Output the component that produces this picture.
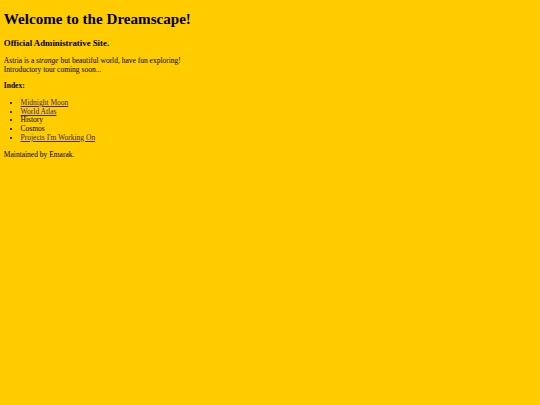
export default function App() {
  return (
    <div className="min-h-[405px] bg-[#ffcc00] p-[3.8px] text-[7.5px] leading-[1.15] text-black" style={{ fontFamily: '"Liberation Serif", "Times New Roman", serif' }}>
      <h1 className="mt-[6.8px] mb-[10px] text-[15.1px] font-bold leading-[1.15]">Welcome to the Dreamscape!</h1>
      <h3 className="mb-[9.4px] text-[8.8px] font-bold leading-[1.15]">Official Administrative Site.</h3>
      <p className="mb-[7.5px]">
        Astria is a <em>strange</em> but beautiful world, have fun exploring!
        <br />
        Introductory tour coming soon...
      </p>
      <h4 className="mb-[8.3px] font-bold">Index:</h4>
      <ul className="mb-[8.3px] list-disc pl-[16.8px]">
        <li><a href="#" className="text-[#3b2a55] underline">Midnight Moon</a></li>
        <li><a href="#" className="text-[#3b2a55] underline">World Atlas</a></li>
        <li>History</li>
        <li>Cosmos</li>
        <li><a href="#" className="text-[#3b2a55] underline">Projects I'm Working On</a></li>
      </ul>
      <p>Maintained by Emarak.</p>
    </div>
  );
}
